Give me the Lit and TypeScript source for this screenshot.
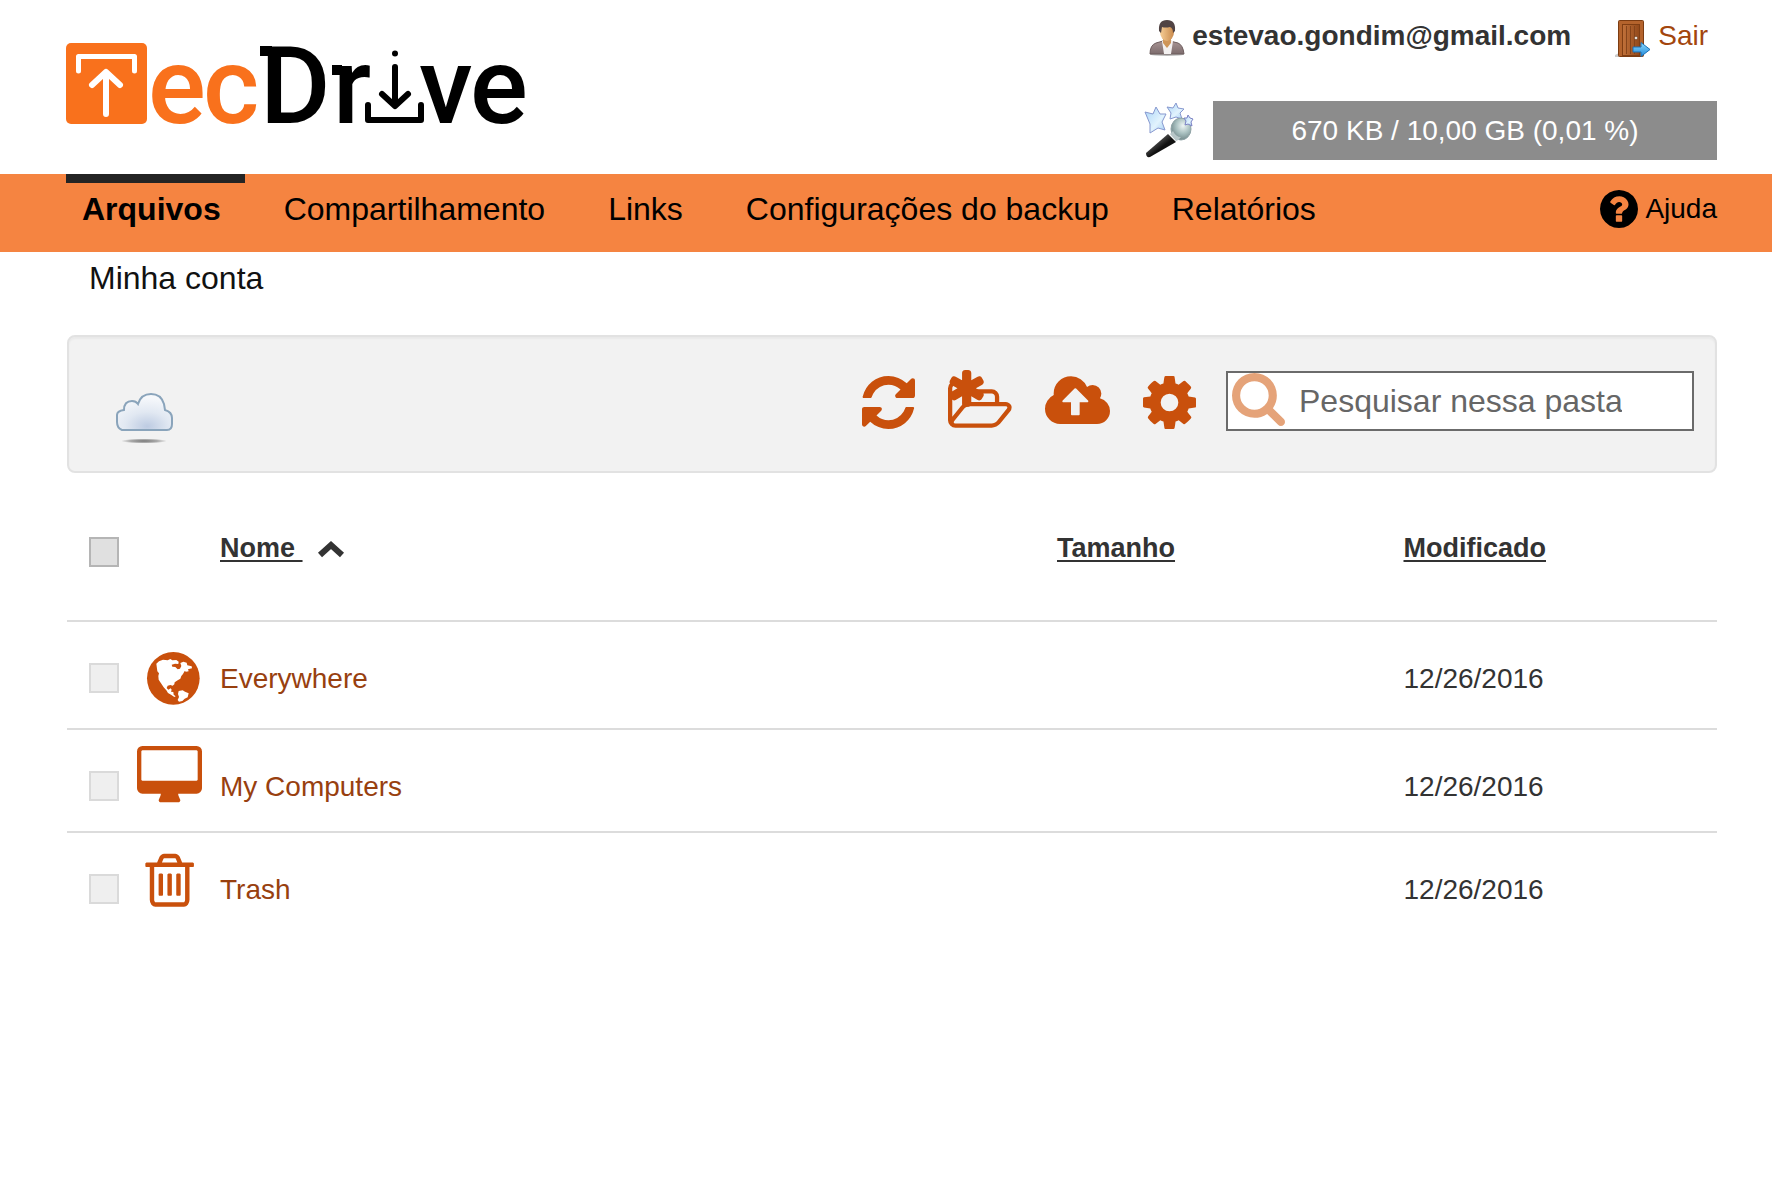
import { LitElement, html, css, TemplateResult } from "lit";
import { customElement, state } from "lit/decorators.js";

interface Entry {
  id: string;
  name: string;
  size: string;
  modified: string;
  icon: TemplateResult;
}

const refreshIcon = html`<svg class="tool" width="53" height="60" viewBox="128 -17 1536 1740" aria-hidden="true">
  <path d="M1639 1056q0 5-1 7-64 268-268 434.5t-478 166.5q-146 0-282.5-55t-243.5-157l-129 129q-19 19-45 19t-45-19-19-45v-448q0-26 19-45t45-19h448q26 0 45 19t19 45-19 45l-137 137q71 66 161 102t187 36q134 0 250-65t186-179q11-17 53-117 8-23 30-23h192q13 0 22.5 9.5t9.5 22.5zm25-800v448q0 26-19 45t-45 19h-448q-26 0-45-19t-19-45 19-45l138-138q-148-137-349-137-134 0-250 65t-186 179q-11 17-53 117-8 23-30 23h-199q-13 0-22.5-9.5t-9.5-22.5v-7q65-268 270-434.5t480-166.5q146 0 284 55.5t245 156.5l130-129q19-19 45-19t45 19 19 45z"/>
</svg>`;

const newFolderIcon = html`<svg class="tool" width="64" height="60" viewBox="0 -292 1920 1800" aria-hidden="true">
  <path d="M1781 803q0-35-53-35h-1088q-40 0-85.5 21.5t-71.5 52.5l-294 363q-18 24-18 40 0 35 53 35h1088q40 0 86-22t71-53l294-363q18-22 18-39zm-1141-163h768v-160q0-40-28-68t-68-28h-576q-40 0-68-28t-28-68v-64q0-40-28-68t-68-28h-320q-40 0-68 28t-28 68v853l256-315q44-53 116-87.5t140-34.5zm1269 163q0 62-46 120l-295 363q-43 53-116 87.5t-140 34.5h-1088q-92 0-158-66t-66-158v-960q0-92 66-158t158-66h320q92 0 158 66t66 158v32h544q92 0 158 66t66 158v160h192q54 0 99 24.5t67 70.5q15 32 15 68z"/>
  <path transform="translate(560 228) scale(.72) translate(-896 -896)" d="M1546 1050q46 26 59.5 77.5t-12.5 97.5l-64 110q-26 46-77.5 59.5t-97.5-12.5l-266-153v307q0 52-38 90t-90 38h-128q-52 0-90-38t-38-90v-307l-266 153q-46 26-97.5 12.5t-77.5-59.5l-64-110q-26-46-12.5-97.5t59.5-77.5l266-154-266-154q-46-26-59.5-77.5t12.5-97.5l64-110q26-46 77.5-59.5t97.5 12.5l266 153v-307q0-52 38-90t90-38h128q52 0 90 38t38 90v307l266-153q46-26 97.5-12.5t77.5 59.5l64 110q26 46 12.5 97.5t-59.5 77.5l-266 154z"/>
</svg>`;

const uploadIcon = html`<svg class="tool" width="65" height="60" viewBox="0 -28 1920 1772" aria-hidden="true">
  <path d="M1280 864q0-14-9-23l-352-352q-9-9-23-9t-23 9l-351 351q-10 12-10 24 0 14 9 23t23 9h224v352q0 13 9.5 22.5t22.5 9.5h192q13 0 22.5-9.5t9.5-22.5v-352h224q13 0 22.5-9.5t9.5-22.5zm640 288q0 159-112.5 271.5t-271.5 112.5h-1088q-185 0-316.5-131.5t-131.5-316.5q0-130 70-240t188-165q-2-30-2-43 0-212 150-362t362-150q156 0 285.5 87t188.5 231q71-62 166-62 106 0 181 75t75 181q0 76-41 138 130 31 213.5 135.5t83.5 238.5z"/>
</svg>`;

const gearIcon = html`<svg class="tool" width="53" height="60" viewBox="128 -17 1536 1740" aria-hidden="true">
  <path d="M1152 896q0-106-75-181t-181-75-181 75-75 181 75 181 181 75 181-75 75-181zm512-109v222q0 12-8 23t-20 13l-185 28q-19 54-39 91 35 50 107 138 10 12 10 25t-9 23q-27 37-99 108t-94 71q-12 0-26-9l-138-108q-44 23-91 38-16 136-29 186-7 28-36 28h-222q-14 0-24.5-8.5t-11.5-21.5l-28-184q-49-16-90-37l-141 107q-10 9-25 9-14 0-25-11-126-114-165-168-7-10-7-23 0-12 8-23 15-21 51-66.5t54-70.5q-27-50-41-99l-183-27q-13-2-21-12.5t-8-23.5v-222q0-12 8-23t19-13l186-28q14-46 39-92-40-57-107-138-10-12-10-24 0-10 9-23 26-36 98.5-107.5t94.5-71.5q13 0 26 10l138 107q44-23 91-38 16-136 29-186 7-28 36-28h222q14 0 24.5 8.5t11.5 21.5l28 184q49 16 90 37l142-107q9-9 24-9 13 0 25 10 129 119 165 170 7 8 7 22 0 12-8 23-15 21-51 66.5t-54 70.5q26 50 41 98l183 28q13 2 21 12.5t8 23.5z"/>
</svg>`;

const searchIcon = html`<svg class="lens" width="53" height="53" viewBox="64 128 1664 1664" aria-hidden="true">
  <path d="M1216 832q0-185-131.5-316.5t-316.5-131.5-316.5 131.5-131.5 316.5 131.5 316.5 316.5 131.5 316.5-131.5 131.5-316.5zm512 832q0 52-38 90t-90 38q-54 0-90-38l-343-342q-179 124-399 124-143 0-273.5-55.5t-225-150-150-225-55.5-273.5 55.5-273.5 150-225 225-150 273.5-55.5 273.5 55.5 225 150 150 225 55.5 273.5q0 220-124 399l343 343q37 37 37 90z"/>
</svg>`;

const helpIcon = html`<svg width="38" height="38" viewBox="128 128 1536 1536" aria-hidden="true">
  <path d="M1024 1376v-192q0-14-9-23t-23-9h-192q-14 0-23 9t-9 23v192q0 14 9 23t23 9h192q14 0 23-9t9-23zm256-672q0-88-55.5-163t-138.5-116-170-41q-243 0-371 213-15 24 8 42l132 100q7 6 19 6 16 0 25-12 53-68 86-92 34-24 86-24 48 0 85.5 26t37.5 59q0 38-20 61t-68 45q-63 28-115.5 86.5t-52.5 125.5v36q0 14 9 23t23 9h192q14 0 23-9t9-23q0-19 21.5-49.5t54.5-49.5q32-18 49-28.5t46-35 44.5-48 28-60.5 12.5-81zm384 192q0 209-103 385.5t-279.5 279.5-385.5 103-385.5-103-279.5-279.5-103-385.5 103-385.5 279.5-279.5 385.5-103 385.5 103 279.5 279.5 103 385.5z"/>
</svg>`;

const globeIcon = html`<svg class="globe" width="66" height="60" viewBox="0 0 198 180" aria-hidden="true">
  <circle cx="109" cy="91" r="79"/>
  <path class="land" d="M58 47l8-7 12-5 14 2 8-4 6 4 12-1 7 5 -1 7-10-1-10 3 2 6 9 1 7 7 7-2 4-8-3-9 9-4 10 3 2 8 13 3 1 6-12 3 2 6-8 1-4-2-5 9-5 6-3 8-8 5-9 6-1 6-5 4-7-2-8 2-3 7 5 5 7-4 3 4-2 6 7 1 1 8 6 5-4 2-10-7-9-5-5-8-8-9-8-12-7-11-1-11 2-8-5-6z"/>
  <path class="land" d="M125 129l12-2 7 4 11 5-3 12-9 4-7 7-10 2-4-5 4-9-3-9z"/>
</svg>`;

const desktopIcon = html`<svg width="65" height="60" viewBox="0 0 1920 1772" aria-hidden="true">
  <path d="M1792 992v-832q0-13-9.5-22.5t-22.5-9.5h-1600q-13 0-22.5 9.5t-9.5 22.5v832q0 13 9.5 22.5t22.5 9.5h1600q13 0 22.5-9.5t9.5-22.5zm128-832v1088q0 66-47 113t-113 47h-544q0 37 16 77.5t32 71 16 43.5q0 26-19 45t-45 19h-512q-26 0-45-19t-19-45q0-14 16-44t32-70 16-78h-544q-66 0-113-47t-47-113v-1088q0-66 47-113t113-47h1600q66 0 113 47t47 113z"/>
</svg>`;

const trashIcon = html`<svg width="65" height="60" viewBox="-50 -10 1884 1740" aria-hidden="true">
  <path d="M704 736v576q0 14-9 23t-23 9h-64q-14 0-23-9t-9-23v-576q0-14 9-23t23-9h64q14 0 23 9t9 23zm256 0v576q0 14-9 23t-23 9h-64q-14 0-23-9t-9-23v-576q0-14 9-23t23-9h64q14 0 23 9t9 23zm256 0v576q0 14-9 23t-23 9h-64q-14 0-23-9t-9-23v-576q0-14 9-23t23-9h64q14 0 23 9t9 23zm128 724v-948h-896v948q0 22 7 40.5t14.5 27 10.5 8.5h832q3 0 10.5-8.5t14.5-27 7-40.5zm-672-1076h448l-48-117q-7-9-17-11h-317q-10 2-17 11zm928 32v64q0 14-9 23t-23 9h-96v948q0 83-47 143.5t-113 60.5h-832q-66 0-113-58.5t-47-141.5v-952h-96q-14 0-23-9t-9-23v-64q0-14 9-23t23-9h309l70-167q15-37 54-63t79-26h320q40 0 79 26t54 63l70 167h309q14 0 23 9t9 23z"/>
</svg>`;

const userIcon = html`<svg width="36" height="36" viewBox="0 0 36 36" aria-hidden="true">
  <defs>
    <linearGradient id="skin" x1="0" x2="1"><stop offset="0" stop-color="#f6cd96"/><stop offset="1" stop-color="#c98a4c"/></linearGradient>
    <linearGradient id="coat" x1="0" y1="0" x2="0" y2="1"><stop offset="0" stop-color="#a89494"/><stop offset="1" stop-color="#7d6c6d"/></linearGradient>
  </defs>
  <ellipse cx="18" cy="34.5" rx="17" ry="1.5" fill="#bbb"/>
  <path d="M1 34q0-9 6-11l7-2h7l8 2q5 2 6 11z" fill="url(#coat)" stroke="#6d5c5d"/>
  <path d="M13 21l2 13h7l2-13z" fill="#f3f0f0"/>
  <path d="M14 17h8v6l-4 5-4-5z" fill="#cf9558"/>
  <ellipse cx="18" cy="12" rx="7" ry="9" fill="url(#skin)"/>
  <path d="M10 11q-1-11 8-11 9 0 8 11l-2 2q0-5-3-6-5 1-8 0l-1 6z" fill="#514444"/>
</svg>`;

const doorIcon = html`<svg width="36" height="37" viewBox="0 0 36 37" aria-hidden="true">
  <defs>
    <linearGradient id="wood" x1="0" x2="1"><stop offset="0" stop-color="#c0713a"/><stop offset="1" stop-color="#93491a"/></linearGradient>
    <linearGradient id="exit" x1="0" y1="0" x2="0" y2="1"><stop offset="0" stop-color="#8fdcff"/><stop offset="1" stop-color="#1f87d8"/></linearGradient>
  </defs>
  <path d="M0 35l4-2v4H0z" fill="#ccc"/>
  <rect x="3.500" y=".5" width="25" height="36" rx="1" fill="#b4632c" stroke="#7c3c12"/>
  <rect x="7.500" y="4.500" width="17" height="31" fill="url(#wood)" stroke="#803e13"/>
  <path d="M11.500 6v28M15.500 6v28M19.500 6v28" stroke="#86441a" stroke-width="1"/>
  <circle cx="21" cy="18" r="1.800" fill="#e8e0d8" stroke="#5e2c0b" stroke-width=".6"/>
  <path d="M18 27h8v-4.500l9 7-9 7V32h-8z" fill="url(#exit)" stroke="#1b6fb5"/>
</svg>`;

const wandIcon = html`<svg width="49" height="55" viewBox="0 0 49 55" aria-hidden="true">
  <defs>
    <linearGradient id="star" x1="0" y1="0" x2="1" y2="1"><stop offset="0" stop-color="#a9d4f7"/><stop offset=".6" stop-color="#e2f3fd"/><stop offset="1" stop-color="#9fcbf2"/></linearGradient>
    <radialGradient id="orb" cx=".6" cy=".35" r=".7"><stop offset="0" stop-color="#eef5f4"/><stop offset=".5" stop-color="#a9c0c0"/><stop offset="1" stop-color="#6b8184"/></radialGradient>
    <linearGradient id="stick" x1="0" y1="0" x2="1" y2="1"><stop offset=".3" stop-color="#555"/><stop offset=".55" stop-color="#111"/></linearGradient>
  </defs>
  <path d="M23 31l8 8L5 54q-4 1-4-4z" fill="url(#stick)"/>
  <path d="M0 9l8 2 3-7 4 7 6 0-4 8 3 8-7-2-8 5v-9z" fill="url(#star)" stroke="#8798cf"/>
  <path d="M22 4l6 1 3-5 2 5 6 1-4 4 2 6-6-2-6 2 1-6z" fill="url(#star)" stroke="#8798cf"/>
  <ellipse cx="36" cy="26" rx="10" ry="11" fill="url(#orb)" stroke="#8fa3a6"/>
  <path d="M25 31l6 7q3-1 5-4-5 0-8-6z" fill="#b8c6c8"/>
  <path d="M39 15l3 0 1-3 2 3 3 1-2 3 1 4-4-2-3 1 1-4z" fill="url(#star)" stroke="#7d83c4"/>
</svg>`;

const cloudIcon = html`<svg class="cloud" width="58" height="52" viewBox="0 0 58 52" aria-hidden="true">
  <defs>
    <radialGradient id="puff" cx=".55" cy=".9" r=".8"><stop offset="0" stop-color="#bdcbe2"/><stop offset=".5" stop-color="#e1e8f2"/><stop offset="1" stop-color="#f6f8fb"/></radialGradient>
    <radialGradient id="shade"><stop offset="0" stop-color="#777"/><stop offset=".6" stop-color="#aaa"/><stop offset="1" stop-color="#f2f2f2"/></radialGradient>
  </defs>
  <path d="M6 37q-5-2-5-8v-7q0-4 7-5 0-9 8-9 4 0 6 3 3-10 13-10 10 0 13 10l1 6q7 2 7 8v6q0 6-5 6z" fill="url(#puff)" stroke="#8aa4bb" stroke-width="2"/>
  <ellipse cx="28" cy="48" rx="23" ry="2.500" fill="url(#shade)"/>
</svg>`;

const logo = html`<svg class="logo" width="460" height="82" viewBox="0 0 460 82" role="img" aria-label="TecDrive">
  <rect x="0" y="0" width="81" height="81" rx="5" fill="#f9711c"/>
  <path d="M12.500 28V13.500h56V28" fill="none" stroke="#fff" stroke-width="5" stroke-linecap="round" stroke-linejoin="round"/>
  <path d="M40 71V30M26 42l14-13 14 13" fill="none" stroke="#fff" stroke-width="6" stroke-linecap="round" stroke-linejoin="round"/>
  <text class="word warm" y="80"><tspan x="82">e</tspan><tspan x="137">c</tspan></text>
  <text class="word" y="80"><tspan x="194">D</tspan><tspan x="267">r</tspan><tspan x="353">v</tspan><tspan x="404">e</tspan></text>
  <path d="M194 3h12v10h-12zM266 22h10v10h-10z"/>
  <circle cx="329" cy="10.500" r="3"/>
  <path d="M329 24v38M316 51l13 12 13-12" fill="none" stroke="#000" stroke-width="6" stroke-linecap="round" stroke-linejoin="round"/>
  <path d="M302 62v15h53V62" fill="none" stroke="#000" stroke-width="6" stroke-linecap="round" stroke-linejoin="round"/>
</svg>`;

@customElement("app-root")
export class AppRoot extends LitElement {
  @state() private ascending = true;

  private tabs = ["Arquivos", "Compartilhamento", "Links", "Configurações do backup", "Relatórios"];

  private entries: Entry[] = [
    { id: "everywhere", name: "Everywhere", size: "", modified: "12/26/2016", icon: globeIcon },
    { id: "computers", name: "My Computers", size: "", modified: "12/26/2016", icon: desktopIcon },
    { id: "trash", name: "Trash", size: "", modified: "12/26/2016", icon: trashIcon },
  ];

  static styles = css`
    :host {
      display: block;
      font-family: "Liberation Sans", Arial, sans-serif;
      font-size: 28px;
      line-height: 32px;
      color: #333;
      background: #fff;
    }
    *, *::before { box-sizing: border-box; }
    svg { display: block; flex: none; overflow: visible; }
    a { color: inherit; text-decoration: none; white-space: nowrap; }
    button { border: 0; padding: 0; background: none; font: inherit; color: inherit; cursor: pointer; }

    .header { display: flex; justify-content: space-between; padding: 20px 55px 14px 66px; }
    .brand { padding-top: 23px; }
    .word { font-family: Roboto, sans-serif; font-weight: 500; font-size: 108px; fill: #000; }
    .warm { fill: #f9711c; }
    .account { display: flex; flex-direction: column; gap: 44px; }
    .user { display: flex; justify-content: flex-end; gap: 44px; padding-right: 9px; }
    .user-item { display: flex; gap: 7px; }
    .email { font-weight: 700; }
    .exit { color: #a3460d; }
    .usage { display: flex; justify-content: flex-end; align-items: center; gap: 19px; }
    .quota { width: 504px; background: #8c8c8c; color: #fff; text-align: center; line-height: 59px; }

    .nav { display: flex; justify-content: space-between; padding: 0 55px 17px 66px; background: #f58441; color: #000; }
    .tabs { display: flex; gap: 23px; }
    .tab { padding: 0 24px 0 16px; border-top: 9px solid transparent; font-size: 32px; line-height: 52px; }
    .tab.active { border-color: #242424; font-weight: 700; }
    .help { display: flex; align-items: center; align-self: flex-end; gap: 7px; height: 38px; margin-bottom: 7px; }

    .main { padding: 8px 55px 0 67px; }
    .crumb { margin: 0; padding-left: 22px; font-size: 32px; line-height: 36px; font-weight: 400; color: #111; }
    .toolbar {
      display: flex; align-items: flex-start; gap: 30px;
      margin-top: 39px; padding: 34px 21px 26px 47px;
      border: 2px solid #e2e2e2; border-radius: 8px; background: #f2f2f2;
      box-shadow: inset 0 2px 2px rgba(0, 0, 0, .04);
    }
    .cloud { margin-top: 22px; }
    .tools { display: flex; gap: 33px; margin-left: auto; }
    .tool { fill: #c9500c; }
    .search { display: flex; width: 468px; height: 60px; padding-left: 4px; border: 2px solid #6b6b6b; background: #fff; }
    .lens { fill: #e5a379; }
    .field {
      flex: 1; min-width: 0; margin: 0 70px 0 14px; padding: 0; border: 0; outline: 0;
      background: none; font: inherit; font-size: 32px; color: #333;
    }
    .field::placeholder { color: #666; opacity: 1; }

    .files { width: 100%; margin-top: 23px; table-layout: fixed; border-collapse: collapse; text-align: left; }
    .col-check { width: 70px; }
    .col-icon { width: 83px; }
    .col-size { width: 21%; }
    .col-date { width: 19%; }
    th, td { padding: 0; vertical-align: top; }
    .head { height: 125px; font-size: 27px; }
    .head th { padding-top: 36px; border-bottom: 2px solid #dcdcdc; }
    .sort { display: inline-flex; align-items: center; gap: 15px; font-weight: 700; line-height: 32px; }
    .sort-label { text-decoration: underline; text-decoration-thickness: 2px; text-underline-offset: 3px; text-decoration-skip-ink: none; }
    .caret { fill: none; stroke: #333; stroke-width: 6; }
    .caret.down { transform: rotate(180deg); }
    .head .check-cell { padding-top: 41px; }
    .row { height: 103px; }
    .row:first-child { height: 108px; }
    .row td { padding-top: 41px; }
    .row:not(:last-child) td { border-bottom: 2px solid #dcdcdc; }
    .check-cell { padding-left: 22px; }
    .row .icon-cell { padding-top: 16px; fill: #c9500c; }
    .globe { margin-top: 10px; }
    .land { fill: #fff; }
    .name { color: #98400f; }
    .check {
      appearance: none; display: block; width: 30px; height: 30px; margin: 0;
      border: 2px solid #dadada; background: #efefef;
    }
    .check.all { border-color: #b5b5b5; background: #e0e0e0; }
    .check:checked { background: #c9500c; }
  `;

  private toggleSort() {
    this.ascending = !this.ascending;
  }

  private get sorted() {
    const list = [...this.entries].sort((a, b) => a.name.localeCompare(b.name));
    return this.ascending ? list : list.reverse();
  }

  render() {
    return html`
      <header class="header">
        <a class="brand" href="#">${logo}</a>
        <div class="account">
          <div class="user">
            <span class="user-item">${userIcon}<span class="email">estevao.gondim@gmail.com</span></span>
            <a class="user-item exit" href="#sair">${doorIcon}<span>Sair</span></a>
          </div>
          <div class="usage">
            ${wandIcon}
            <div class="quota">670 KB / 10,00 GB (0,01 %)</div>
          </div>
        </div>
      </header>

      <nav class="nav">
        <div class="tabs">
          ${this.tabs.map((t, i) => html`<a class="tab ${i === 0 ? "active" : ""}" href="#">${t}</a>`)}
        </div>
        <a class="help" href="#ajuda">${helpIcon}<span>Ajuda</span></a>
      </nav>

      <main class="main">
        <h1 class="crumb">Minha conta</h1>
        <div class="toolbar">
          ${cloudIcon}
          <div class="tools">
            <button type="button" aria-label="Atualizar">${refreshIcon}</button>
            <button type="button" aria-label="Nova pasta">${newFolderIcon}</button>
            <button type="button" aria-label="Enviar">${uploadIcon}</button>
            <button type="button" aria-label="Opções">${gearIcon}</button>
          </div>
          <label class="search">
            ${searchIcon}
            <input class="field" type="text" aria-label="Pesquisar nessa pasta" placeholder="Pesquisar nessa pasta" />
          </label>
        </div>

        <table class="files">
          <colgroup>
            <col class="col-check" /><col class="col-icon" /><col /><col class="col-size" /><col class="col-date" />
          </colgroup>
          <thead>
            <tr class="head">
              <th class="check-cell"><input class="check all" type="checkbox" aria-label="Selecionar tudo" /></th>
              <th></th>
              <th>
                <button class="sort" type="button" @click=${this.toggleSort}>
                  <span class="sort-label">Nome&nbsp;</span>
                  <svg class="caret ${this.ascending ? "" : "down"}" width="26" height="16" viewBox="0 0 26 16" aria-hidden="true">
                    <path d="M2 15L13 5l11 10" />
                  </svg>
                </button>
              </th>
              <th><button class="sort" type="button"><span class="sort-label">Tamanho</span></button></th>
              <th><button class="sort" type="button"><span class="sort-label">Modificado</span></button></th>
            </tr>
          </thead>
          <tbody>
            ${this.sorted.map(
              (e) => html`<tr class="row">
                <td class="check-cell"><input class="check" type="checkbox" aria-label=${e.name} /></td>
                <td class="icon-cell">${e.icon}</td>
                <td><a class="name" href="#${e.id}">${e.name}</a></td>
                <td>${e.size}</td>
                <td>${e.modified}</td>
              </tr>`
            )}
          </tbody>
        </table>
      </main>
    `;
  }
}
